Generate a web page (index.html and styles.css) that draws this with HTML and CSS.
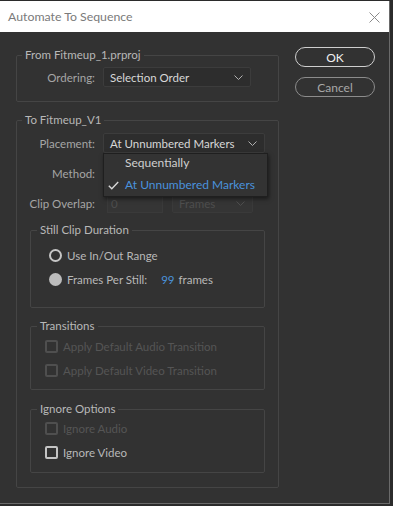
FILE: index.html
```html
<!DOCTYPE html>
<html lang="en">
<head>
    <meta charset="UTF-8">
    <meta name="viewport" content="width=device-width, initial-scale=1.0">
    <title>Automate To Sequence</title>
    <link rel="stylesheet" href="styles.css">
</head>
<body>

<div class="window">
    <div class="titlebar">
        <span class="title">Automate To Sequence</span>
        <svg class="close" width="11" height="11" viewBox="0 0 11 11">
            <path d="M0.5 0.5 L10.5 10.5 M10.5 0.5 L0.5 10.5" stroke="#8a8a8a" stroke-width="1" fill="none"/>
        </svg>
    </div>

    <div class="content">
        <div class="main">
            <fieldset class="group">
                <legend>From Fitmeup_1.prproj</legend>
                <div class="row first">
                    <label class="row-label">Ordering:</label>
                    <div class="select select-order">
                        <span>Selection Order</span>
                        <svg class="chevron" width="9" height="5" viewBox="0 0 9 5"><path d="M0.5 0.5 L4.5 4.5 L8.5 0.5" stroke="#b0b0b0" fill="none"/></svg>
                    </div>
                </div>
            </fieldset>

            <fieldset class="group group-target">
                <legend>To Fitmeup_V1</legend>
                <div class="row first-target">
                    <label class="row-label">Placement:</label>
                    <div class="select select-placement">
                        <span>At Unnumbered Markers</span>
                        <svg class="chevron" width="9" height="5" viewBox="0 0 9 5"><path d="M0.5 0.5 L4.5 4.5 L8.5 0.5" stroke="#b0b0b0" fill="none"/></svg>
                        <div class="menu">
                            <div class="menu-item">Sequentially</div>
                            <div class="menu-item checked">
                                <svg class="check" width="11" height="9" viewBox="0 0 11 9"><path d="M0.8 4.8 L3.8 7.8 L10.2 1" stroke="#d8d8d8" stroke-width="1.4" fill="none"/></svg>
                                At Unnumbered Markers
                            </div>
                        </div>
                    </div>
                </div>
                <div class="row">
                    <label class="row-label">Method:</label>
                </div>
                <div class="row">
                    <label class="row-label">Clip Overlap:</label>
                    <div class="field disabled">0</div>
                    <div class="select select-units disabled">
                        <span>Frames</span>
                        <svg class="chevron" width="9" height="5" viewBox="0 0 9 5"><path d="M0.5 0.5 L4.5 4.5 L8.5 0.5" stroke="#4e4e4e" fill="none"/></svg>
                    </div>
                </div>

                <fieldset class="sub sub-still">
                    <legend>Still Clip Duration</legend>
                    <div class="option first-option">
                        <span class="radio"></span>
                        <span>Use In/Out Range</span>
                    </div>
                    <div class="option">
                        <span class="radio on"></span>
                        <span>Frames Per Still:</span>
                        <span class="num">99</span>
                        <span>frames</span>
                    </div>
                </fieldset>

                <fieldset class="sub sub-trans">
                    <legend>Transitions</legend>
                    <div class="option first-check disabled">
                        <span class="checkbox"></span>
                        <span>Apply Default Audio Transition</span>
                    </div>
                    <div class="option disabled">
                        <span class="checkbox"></span>
                        <span>Apply Default Video Transition</span>
                    </div>
                </fieldset>

                <fieldset class="sub sub-ignore">
                    <legend>Ignore Options</legend>
                    <div class="option first-ignore disabled">
                        <span class="checkbox"></span>
                        <span>Ignore Audio</span>
                    </div>
                    <div class="option">
                        <span class="checkbox"></span>
                        <span>Ignore Video</span>
                    </div>
                </fieldset>
            </fieldset>
        </div>

        <div class="buttons">
            <button class="btn btn-ok">OK</button>
            <button class="btn btn-cancel">Cancel</button>
        </div>
    </div>
</div>

</body>
</html>
```

FILE: styles.css
```css
body {
    margin: 0;
    padding: 0;
    background: #2b2b2b;
    font-family: 'Lato', 'Liberation Sans', sans-serif;
    font-size: 11.5px;
    color: #b0b0b0;
}

.window {
    width: 390px;
    height: 503px;
    margin-top: 1px;
    background: #323232;
    border-right: 1px solid #6a6a6a;
    border-bottom: 1px solid #6a6a6a;
    box-sizing: border-box;
    overflow: hidden;
}

.titlebar {
    height: 31px;
    background: #ffffff;
    display: flex;
    align-items: center;
    justify-content: space-between;
    padding: 0 9px 0 8px;
}

.title {
    font-size: 12.3px;
    color: #7a7a7a;
}

.close {
    margin-top: 1px;
}

.content {
    display: flex;
    align-items: flex-start;
}

.main {
    width: 263px;
    margin-left: 16px;
}

/* fieldsets */
.group {
    margin: 15px 0 0 0;
    padding: 0 0 14px 0;
    border: 1px solid #454545;
    border-radius: 2px;
}

.group-target {
    margin-top: 10px;
}

legend {
    margin-left: 5px;
    padding: 0 3px;
    line-height: 16px;
    color: #b8b8b8;
}

.row {
    display: flex;
    align-items: center;
    height: 20px;
    margin-top: 10px;
}

.row.first {
    margin-top: 4px;
}

.row.first-target {
    margin-top: 5px;
}

.row-label {
    width: 78px;
    text-align: right;
    margin-right: 8px;
    color: #a6a6a6;
}

.select {
    position: relative;
    height: 20px;
    box-sizing: border-box;
    border: 1px solid #3c3c3c;
    background: #2d2d2d;
    border-radius: 2px;
    display: flex;
    align-items: center;
    justify-content: space-between;
    padding: 0 7px 0 6px;
    color: #d8d8d8;
}

.select-order {
    width: 148px;
}

.select-placement {
    width: 162px;
}

.chevron {
    margin-top: 1px;
}

.field {
    width: 56px;
    height: 20px;
    box-sizing: border-box;
    margin-left: 4px;
    padding-left: 3px;
    line-height: 19px;
    background: #353535;
    border: 1px solid #3a3a3a;
    color: #4e4e4e;
}

.select-units {
    width: 81px;
    margin-left: 9px;
    background: #353535;
    border-color: #3a3a3a;
    color: #4e4e4e;
}

/* dropdown list */
.menu {
    position: absolute;
    top: 19px;
    left: -1px;
    width: 165px;
    height: 44px;
    box-sizing: border-box;
    background: #333333;
    border: 1px solid #1f1f1f;
    box-shadow: 1px 2px 4px rgba(0, 0, 0, 0.5);
    z-index: 2;
}

.menu-item {
    position: relative;
    height: 20px;
    line-height: 17px;
    padding-left: 21px;
    color: #cfcfcf;
    font-size: 12px;
}

.menu-item.checked {
    color: #4a92dc;
    line-height: 22px;
}

.check {
    position: absolute;
    left: 4px;
    top: 7px;
}

/* inner groups */
.sub {
    margin: 9px 13px 0 13px;
    padding: 0;
    border: 1px solid #454545;
    border-radius: 2px;
}

.sub legend {
    margin-left: 6px;
}

.sub-still {
    padding-bottom: 19px;
}

.sub-trans {
    margin-top: 10px;
    padding-bottom: 10px;
}

.sub-ignore {
    margin-top: 11px;
    padding-bottom: 11px;
}

.option {
    display: flex;
    align-items: center;
    height: 18px;
    margin-top: 6px;
    color: #b8b8b8;
}

.option.first-option {
    margin-top: 8px;
}

.option.first-check {
    margin-top: 3px;
}

.option.first-ignore {
    margin-top: 2px;
}

.option.disabled {
    color: #555555;
}

.radio {
    width: 13px;
    height: 13px;
    box-sizing: border-box;
    margin-left: 18px;
    margin-right: 5px;
    border: 2px solid #c6c6c6;
    border-radius: 50%;
}

.radio.on {
    border: none;
    background: #bcbcbc;
}

.num {
    color: #4a92dc;
    margin-left: 14px;
    margin-right: 4px;
}

.checkbox {
    width: 13px;
    height: 13px;
    box-sizing: border-box;
    margin-left: 14px;
    margin-right: 5px;
    border: 2px solid #c4c4c4;
    border-radius: 2px;
}

.option.disabled .checkbox {
    border-color: #4f4f4f;
}

/* buttons */
.buttons {
    margin-left: 16px;
    margin-top: 15px;
    display: flex;
    flex-direction: column;
}

.btn {
    width: 80px;
    height: 20px;
    padding: 0;
    background: transparent;
    border-radius: 10px;
    font-family: 'Lato', 'Liberation Sans', sans-serif;
    font-size: 12px;
    cursor: pointer;
}

.btn-ok {
    border: 1px solid #cfcfcf;
    color: #f0f0f0;
}

.btn-cancel {
    margin-top: 10px;
    border: 1px solid #8c8c8c;
    color: #a8a8a8;
}
```
